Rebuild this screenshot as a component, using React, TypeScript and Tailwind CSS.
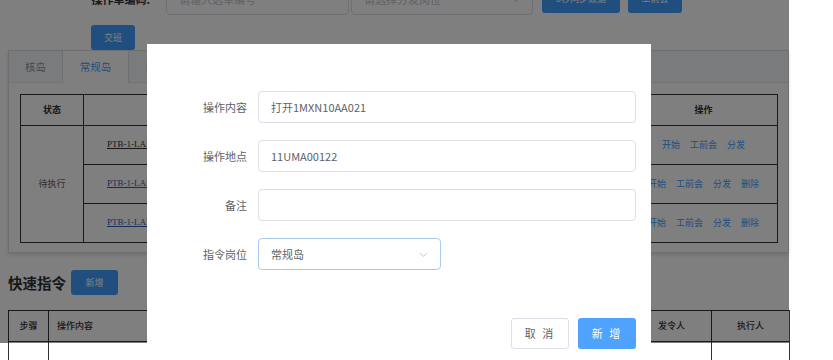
import React from 'react'

const cjk = "font-['Noto_Sans_CJK_SC','Noto_Sans',sans-serif]"

const ActionLinks = ({ del }: { del?: boolean }) => (
  <div className="flex items-center justify-center gap-[10px] text-[9px] text-[#409eff]">
    <span>开始</span>
    <span>工前会</span>
    <span>分发</span>
    {del && <span>删除</span>}
  </div>
)

const Field = ({ label, value }: { label: string; value?: string }) => (
  <div className="flex items-center">
    <div className="w-[111px] pr-[11px] text-right text-[11px] text-[#606266]">{label}</div>
    <div className="flex h-[32px] flex-1 items-center rounded-[4px] border border-[#dcdfe6] px-[12px] text-[11px] text-[#606266]">
      {value}
    </div>
  </div>
)

export default function App() {
  return (
    <div className={`relative h-[360px] w-[833px] overflow-hidden bg-white ${cjk}`}>
      {/* page behind the dialog */}
      <div className="relative h-full w-[789px] bg-white">
        {/* search row, scrolled partly out of view */}
        <div className="mt-[-17px] flex h-[32px] items-center">
          <div className="ml-[80px] w-[70px] whitespace-nowrap text-right text-[11px] font-bold text-[#303133]">操作单编码:</div>
          <div className="ml-[16px] flex h-[32px] w-[183px] items-center rounded-[4px] border border-[#dcdfe6] px-[12px] text-[11px] text-[#c0c4cc]">
            请输入选单编号
          </div>
          <div className="ml-[2px] flex h-[32px] w-[182px] items-center justify-between rounded-[4px] border border-[#dcdfe6] px-[12px] text-[11px] text-[#c0c4cc]">
            <span>请选择分发岗位</span>
            <svg width="9" height="9" viewBox="0 0 10 10" fill="none" stroke="#c0c4cc" strokeWidth="1">
              <path d="M1 3.5 5 7l4-3.5" />
            </svg>
          </div>
          <button className="ml-[9px] h-[28px] w-[78px] rounded-[3px] bg-[#409eff] text-[9px] text-white">0秒同步数据</button>
          <button className="ml-[8px] h-[28px] w-[54px] rounded-[3px] bg-[#409eff] text-[9px] text-white">工前会</button>
        </div>

        <button className="ml-[91px] mt-[10px] block h-[25px] w-[44px] rounded-[3px] bg-[#409eff] text-[9px] text-white">交班</button>

        {/* tab card */}
        <div className="ml-[8px] h-[203px] w-[781px] border border-[#dcdfe6] bg-white shadow-[0_2px_4px_rgba(0,0,0,0.12)]">
          <div className="flex h-[32px] border-b border-[#e4e7ed] bg-[#f5f7fa] text-[10.5px]">
            <div className="flex w-[54px] items-center justify-center border-r border-[#dcdfe6] text-[#909399]">核岛</div>
            <div className="-mb-px flex w-[66px] items-center justify-center border-r border-[#dcdfe6] bg-white text-[#409eff]">常规岛</div>
            <div className="flex items-center border-r border-[#dcdfe6] px-[17px] text-[#909399]">辅助</div>
          </div>
          <div className="p-[11px]">
            <table className="w-[757px] table-fixed border-collapse text-[9px] text-[#303133]">
              <colgroup>
                <col className="w-[63px]" />
                <col className="w-[317px]" />
                <col className="w-[229px]" />
                <col className="w-[148px]" />
              </colgroup>
              <thead>
                <tr className="h-[31px]">
                  <th className="border border-[#333]">状态</th>
                  <th className="border border-[#333]" />
                  <th className="border border-[#333]" />
                  <th className="border border-[#333]">操作</th>
                </tr>
              </thead>
              <tbody>
                <tr className="h-[39px]">
                  <td rowSpan={3} className="border border-[#333] text-center text-[#606266]">待执行</td>
                  <td className="border border-[#333] pl-[23px] font-['Liberation_Serif',serif] underline">PTB-1-LAB-20230415-001</td>
                  <td className="border border-[#333]" />
                  <td className="border border-[#333]"><ActionLinks /></td>
                </tr>
                <tr className="h-[39px]">
                  <td className="border border-[#333] pl-[23px] font-['Liberation_Serif',serif] text-[#2b5fae] underline">PTB-1-LAB-20230415-002</td>
                  <td className="border border-[#333]" />
                  <td className="border border-[#333]"><ActionLinks del /></td>
                </tr>
                <tr className="h-[39px]">
                  <td className="border border-[#333] pl-[23px] font-['Liberation_Serif',serif] text-[#2b5fae] underline">PTB-1-LAB-20230415-003</td>
                  <td className="border border-[#333]" />
                  <td className="border border-[#333]"><ActionLinks del /></td>
                </tr>
              </tbody>
            </table>
          </div>
        </div>

        <div className="ml-[8px] mt-[17px] flex h-[25px] items-center gap-[5px]">
          <span className="text-[14.5px] font-bold text-[#303133]">快速指令</span>
          <button className="h-[25px] w-[47px] rounded-[3px] bg-[#409eff] text-[9px] text-white">新增</button>
        </div>

        <table className="ml-[8px] mt-[15px] w-[781px] table-fixed border-collapse text-[9px] text-[#303133]">
          <colgroup>
            <col className="w-[40px]" />
            <col className="w-[300px]" />
            <col className="w-[283px]" />
            <col className="w-[80px]" />
            <col className="w-[78px]" />
          </colgroup>
          <thead>
            <tr className="h-[31px]">
              <th className="border border-[#333] font-medium">步骤</th>
              <th className="border border-[#333] pl-[8px] text-left font-medium">操作内容</th>
              <th className="border border-[#333] font-medium" />
              <th className="border border-[#333] font-medium">发令人</th>
              <th className="border border-[#333] font-medium">执行人</th>
            </tr>
          </thead>
          <tbody>
            <tr className="h-[31px]">
              <td className="border border-[#333]" />
              <td className="border border-[#333]" />
              <td className="border border-[#333]" />
              <td className="border border-[#333]" />
              <td className="border border-[#333]" />
            </tr>
          </tbody>
        </table>

        <div className="absolute inset-0 bg-black/50" />
      </div>

      {/* dialog */}
      <div className="absolute left-[147px] top-[44px] h-[330px] w-[504px] bg-white pr-[15px] pt-[47px]">
        <div className="flex flex-col gap-[17px]">
          <Field label="操作内容" value="打开1MXN10AA021" />
          <Field label="操作地点" value="11UMA00122" />
          <Field label="备注" />
          <div className="flex items-center">
            <div className="w-[111px] pr-[11px] text-right text-[11px] text-[#606266]">指令岗位</div>
            <div className="flex h-[32px] w-[183px] items-center justify-between rounded-[4px] border border-[#a9cbee] px-[12px] text-[11px] text-[#606266]">
              <span>常规岛</span>
              <svg width="9" height="9" viewBox="0 0 10 10" fill="none" stroke="#c0c4cc" strokeWidth="1">
                <path d="M1 3.5 5 7l4-3.5" />
              </svg>
            </div>
          </div>
        </div>
        <div className="mt-[48px] flex justify-end gap-[9px]">
          <button className="h-[31px] w-[58px] rounded-[3px] border border-[#dcdfe6] bg-white text-[11px] tracking-[2px] text-[#606266]">取 消</button>
          <button className="h-[31px] w-[58px] rounded-[3px] bg-[#4fa3ff] text-[11px] tracking-[2px] text-white">新 增</button>
        </div>
      </div>
    </div>
  )
}
